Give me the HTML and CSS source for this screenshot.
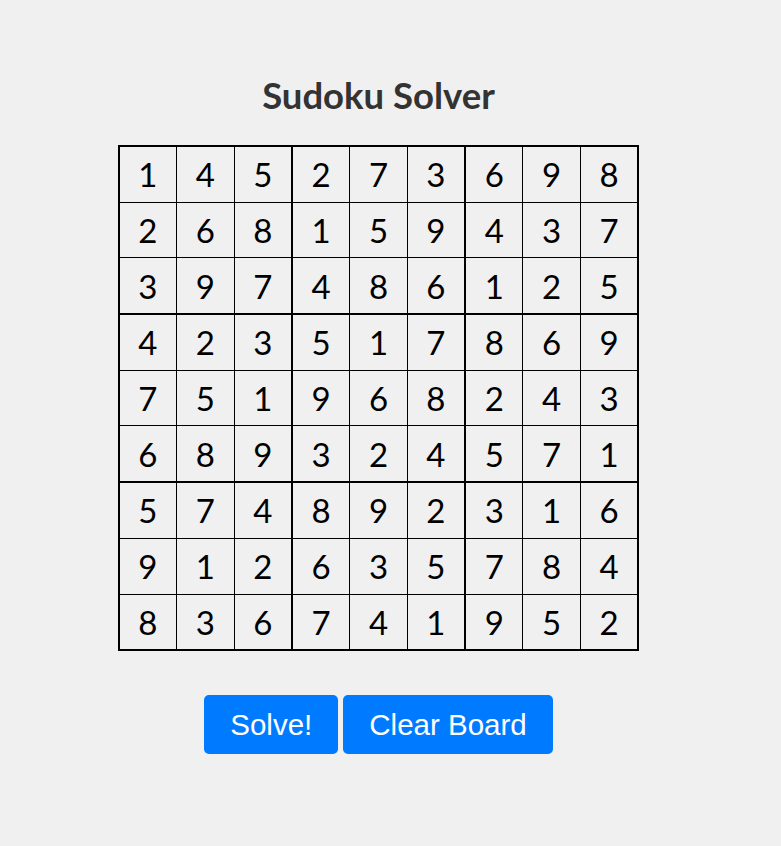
FILE: index.html
```html
<!DOCTYPE html>
<html lang="en">
<head>
<meta charset="utf-8">
<title>Sudoku Solver</title>
<link rel="stylesheet" href="styles.css">
</head>
<body>
<main class="app">
  <h1 class="title">Sudoku Solver</h1>
  <div class="board">
    <div class="cell">1</div><div class="cell">4</div><div class="cell">5</div><div class="cell">2</div><div class="cell">7</div><div class="cell">3</div><div class="cell">6</div><div class="cell">9</div><div class="cell">8</div>
    <div class="cell">2</div><div class="cell">6</div><div class="cell">8</div><div class="cell">1</div><div class="cell">5</div><div class="cell">9</div><div class="cell">4</div><div class="cell">3</div><div class="cell">7</div>
    <div class="cell">3</div><div class="cell">9</div><div class="cell">7</div><div class="cell">4</div><div class="cell">8</div><div class="cell">6</div><div class="cell">1</div><div class="cell">2</div><div class="cell">5</div>
    <div class="cell">4</div><div class="cell">2</div><div class="cell">3</div><div class="cell">5</div><div class="cell">1</div><div class="cell">7</div><div class="cell">8</div><div class="cell">6</div><div class="cell">9</div>
    <div class="cell">7</div><div class="cell">5</div><div class="cell">1</div><div class="cell">9</div><div class="cell">6</div><div class="cell">8</div><div class="cell">2</div><div class="cell">4</div><div class="cell">3</div>
    <div class="cell">6</div><div class="cell">8</div><div class="cell">9</div><div class="cell">3</div><div class="cell">2</div><div class="cell">4</div><div class="cell">5</div><div class="cell">7</div><div class="cell">1</div>
    <div class="cell">5</div><div class="cell">7</div><div class="cell">4</div><div class="cell">8</div><div class="cell">9</div><div class="cell">2</div><div class="cell">3</div><div class="cell">1</div><div class="cell">6</div>
    <div class="cell">9</div><div class="cell">1</div><div class="cell">2</div><div class="cell">6</div><div class="cell">3</div><div class="cell">5</div><div class="cell">7</div><div class="cell">8</div><div class="cell">4</div>
    <div class="cell">8</div><div class="cell">3</div><div class="cell">6</div><div class="cell">7</div><div class="cell">4</div><div class="cell">1</div><div class="cell">9</div><div class="cell">5</div><div class="cell">2</div>
  </div>
  <div class="actions">
    <button class="btn" type="button">Solve!</button>
    <button class="btn" type="button">Clear Board</button>
  </div>
</main>
</body>
</html>
```

FILE: styles.css
```css
html, body {
  margin: 0;
  padding: 0;
  background: #f0f0f0;
}

.app {
  width: 757px;
  padding-top: 74px;
  text-align: center;
}

.title {
  margin: 0 0 29px;
  font-family: Lato, "Open Sans", sans-serif;
  font-weight: 700;
  font-size: 36.5px;
  line-height: 42px;
  color: #333333;
}

.board {
  display: grid;
  grid-template-columns: repeat(9, auto);
  width: max-content;
  margin: 0 auto;
  border: 2px solid #000;
}

.cell {
  width: 56.4px;
  height: 54.7px;
  display: flex;
  align-items: center;
  justify-content: center;
  border-right: 1px solid #000;
  border-bottom: 1px solid #000;
  font-family: Lato, "Open Sans", sans-serif;
  font-size: 33px;
  color: #000;
}

.cell:nth-child(3n) {
  border-right-width: 2px;
}

.cell:nth-child(9n) {
  border-right: none;
}

.cell:nth-child(n+19):nth-child(-n+27),
.cell:nth-child(n+46):nth-child(-n+54) {
  border-bottom-width: 2px;
}

.cell:nth-child(n+73) {
  border-bottom: none;
}

.actions {
  display: flex;
  justify-content: center;
  gap: 5px;
  margin-top: 44px;
}

.btn {
  height: 59px;
  padding: 0 26px;
  border: none;
  border-radius: 5px;
  background: #007bff;
  color: #fff;
  font-family: "Liberation Sans", Arial, sans-serif;
  font-size: 29.5px;
  line-height: 59px;
  cursor: pointer;
}
```
